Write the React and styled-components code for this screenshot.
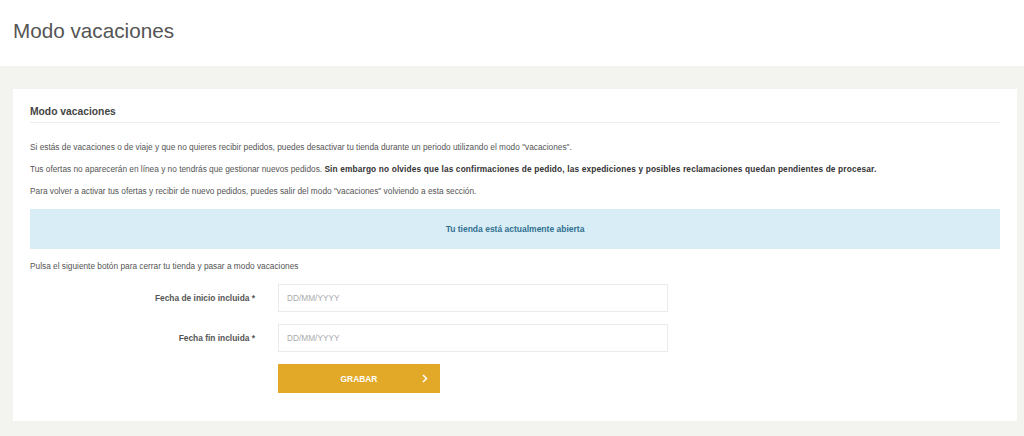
import styled, { createGlobalStyle } from "styled-components"

const GlobalStyle = createGlobalStyle`
  html, body {
    margin: 0;
    padding: 0;
    background: #f3f3ef;
    font-family: "Liberation Sans", Arial, sans-serif;
    color: #555;
  }
`

const PageHeader = styled.header`
  background: #fff;
  height: 66px;
  padding: 0 13px;
  display: flex;
  align-items: center;

  h1 {
    margin: 0 0 5px;
    font-size: 20.7px;
    font-weight: normal;
    color: #555;
  }
`

const Main = styled.main`
  padding: 23px 7px 14px 13px;
`

const Card = styled.section`
  background: #fff;
  padding: 14px 17px 28px 17px;
`

const CardTitle = styled.h2`
  margin: 0 0 20px;
  padding: 3px 0 5px;
  font-size: 10.3px;
  font-weight: bold;
  color: #444;
  border-bottom: 1px solid #eee;
`

const Text = styled.p`
  margin: 0 0 14px;
  font-size: 8.3px;
  line-height: 8px;
  color: #555;

  strong {
    color: #333;
    letter-spacing: 0.15px;
  }
`

const Alert = styled.div`
  background: #d9edf7;
  color: #31708f;
  font-size: 8.5px;
  font-weight: bold;
  height: 40px;
  display: flex;
  align-items: center;
  justify-content: center;
  margin: 5px 0 13px;
`

const Form = styled.form`
  display: grid;
  grid-template-columns: 225px 390px;
  column-gap: 23px;
  row-gap: 12px;
  margin-top: 10px;
  align-items: center;
`

const Label = styled.label`
  text-align: right;
  font-size: 8.4px;
  font-weight: bold;
  color: #555;
  padding-bottom: 1px;
`

const Input = styled.input`
  box-sizing: border-box;
  height: 28px;
  width: 100%;
  border: 1px solid #ebebeb;
  padding: 0 8px;
  font-family: inherit;
  font-size: 8.3px;
  color: #555;
  outline: none;

  &::placeholder {
    color: #aaa;
  }
`

const Button = styled.button`
  grid-column: 2;
  width: 162px;
  height: 29px;
  border: none;
  background: #e2a928;
  color: #fff;
  font-family: inherit;
  font-size: 8.4px;
  font-weight: bold;
  position: relative;
  cursor: pointer;

  svg {
    position: absolute;
    right: 12px;
    top: 10px;
  }
`

export default function App() {
  return (
    <>
      <GlobalStyle />
      <PageHeader>
        <h1>Modo vacaciones</h1>
      </PageHeader>
      <Main>
        <Card>
          <CardTitle>Modo vacaciones</CardTitle>
          <Text>
            Si estás de vacaciones o de viaje y que no quieres recibir pedidos, puedes desactivar tu
            tienda durante un periodo utilizando el modo "vacaciones".
          </Text>
          <Text>
            Tus ofertas no aparecerán en línea y no tendrás que gestionar nuevos pedidos.{" "}
            <strong>
              Sin embargo no olvides que las confirmaciones de pedido, las expediciones y posibles
              reclamaciones quedan pendientes de procesar.
            </strong>
          </Text>
          <Text>
            Para volver a activar tus ofertas y recibir de nuevo pedidos, puedes salir del modo
            "vacaciones" volviendo a esta sección.
          </Text>
          <Alert>Tu tienda está actualmente abierta</Alert>
          <Text>Pulsa el siguiente botón para cerrar tu tienda y pasar a modo vacaciones</Text>
          <Form onSubmit={(e) => e.preventDefault()}>
            <Label htmlFor="inicio">Fecha de inicio incluida *</Label>
            <Input id="inicio" placeholder="DD/MM/YYYY" />
            <Label htmlFor="fin">Fecha fin incluida *</Label>
            <Input id="fin" placeholder="DD/MM/YYYY" />
            <Button type="submit">
              GRABAR
              <svg width="6" height="9" viewBox="0 0 6 9">
                <path d="M1 1l3.5 3.5L1 8" fill="none" stroke="#fff" strokeWidth="1.5" />
              </svg>
            </Button>
          </Form>
        </Card>
      </Main>
    </>
  )
}
